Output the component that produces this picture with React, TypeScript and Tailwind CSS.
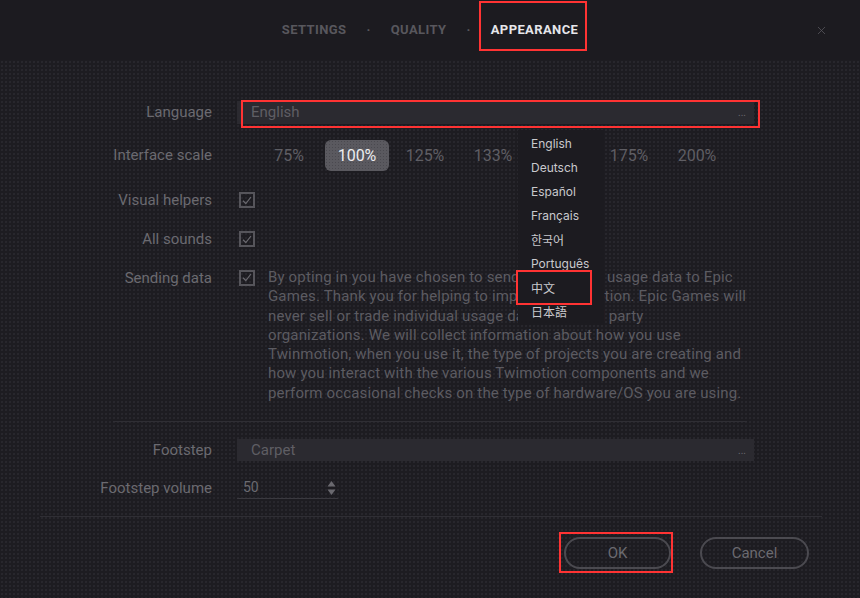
import { X } from "lucide-react";

const LANGS = [
  { label: "English", cjk: false },
  { label: "Deutsch", cjk: false },
  { label: "Español", cjk: false },
  { label: "Français", cjk: false },
  { label: "한국어", cjk: true },
  { label: "Português", cjk: false },
  { label: "中文", cjk: true },
  { label: "日本語", cjk: true },
];

const SCALES = ["75%", "100%", "125%", "133%", "150%", "175%", "200%"];

function Check() {
  return (
    <div className="w-[16px] h-[16px] border-2 border-[#56555b] grid place-items-center">
      <svg width="10" height="9" viewBox="0 0 10 9" fill="none">
        <path d="M1 4.8 L3.8 7.5 L9 1" stroke="#6a696f" strokeWidth="1.2" />
      </svg>
    </div>
  );
}

function Label({ children }: { children: React.ReactNode }) {
  return <div className="w-[212px] shrink-0 text-right text-[15px] text-[#6b6a70]">{children}</div>;
}

export default function App() {
  const dots =
    "bg-[radial-gradient(circle,#28272d_0.7px,transparent_0.9px)] bg-[length:4px_4px]";

  return (
    <div className="relative w-[860px] h-[598px] overflow-hidden bg-[#1d1c21] font-['Roboto',sans-serif]">
      {/* header tabs */}
      <div className="h-[60px] flex items-center justify-center gap-[20px] text-[13px] font-bold tracking-[0.03em] bg-[#1c1b20]">
        <span className="text-[#58575d]">SETTINGS</span>
        <span className="text-[#58575d]">·</span>
        <span className="text-[#58575d]">QUALITY</span>
        <span className="text-[#58575d]">·</span>
        <span className="text-[#e6e6ea]">APPEARANCE</span>
      </div>
      <X className="absolute left-[815px] top-[24px] w-[13px] h-[13px] text-[#56555b]" strokeWidth={1.5} />

      <div className={"h-[538px] flex flex-col pt-[41px] " + dots}>
        {/* Language */}
        <div className="flex items-center h-[23px]">
          <Label>Language</Label>
          <div className="ml-[25px] w-[517px] h-[23px] bg-[#2b2a30] flex items-center justify-between pl-[14px] pr-[8px] text-[15px] text-[#5f5e64]">
            <span>English</span>
            <span className="text-[10px] text-[#6b6a70]">...</span>
          </div>
        </div>

        {/* Interface scale */}
        <div className="flex items-center h-[31px] mt-[16px]">
          <Label>Interface scale</Label>
          <div className="ml-[43px] flex items-center">
            {SCALES.map((s) =>
              s === "100%" ? (
                <div key={s} className="w-[68px] flex justify-center">
                  <div className="w-[64px] h-[31px] rounded-[6px] bg-[#5a595f] grid place-items-center text-[16px] text-[#ececef] bg-[radial-gradient(circle,#4a494f_0.7px,transparent_0.9px)] bg-[length:3px_3px]">
                    {s}
                  </div>
                </div>
              ) : (
                <div key={s} className="w-[68px] text-center text-[16px] text-[#5f5e64]">
                  {s}
                </div>
              )
            )}
          </div>
        </div>

        {/* Visual helpers */}
        <div className="flex items-center h-[20px] mt-[19px]">
          <Label>Visual helpers</Label>
          <div className="ml-[27px]">
            <Check />
          </div>
        </div>

        {/* All sounds */}
        <div className="flex items-center h-[20px] mt-[19px]">
          <Label>All sounds</Label>
          <div className="ml-[27px]">
            <Check />
          </div>
        </div>

        {/* Sending data */}
        <div className="flex items-start mt-[19px]">
          <div className="h-[19.5px] flex items-center">
            <Label>Sending data</Label>
          </div>
          <div className="ml-[27px] h-[19.5px] flex items-center">
            <Check />
          </div>
          <p className="ml-[13px] text-[15px] tracking-[0.15px] leading-[19.3px] text-[#5c5b61]">
            By opting in you have chosen to send anonymous usage data to Epic
            <br />
            Games. Thank you for helping to improve Twinmotion. Epic Games will
            <br />
            never sell or trade individual usage data with third party
            <br />
            organizations. We will collect information about how you use
            <br />
            Twinmotion, when you use it, the type of projects you are creating and
            <br />
            how you interact with the various Twimotion components and we
            <br />
            perform occasional checks on the type of hardware/OS you are using.
          </p>
        </div>

        <div className="ml-[113px] w-[634px] h-px bg-[#2f2e34] mt-[18px]" />

        {/* Footstep */}
        <div className="flex items-center h-[22px] mt-[17px]">
          <Label>Footstep</Label>
          <div className="ml-[25px] w-[517px] h-[22px] bg-[#2b2a30] flex items-center justify-between pl-[14px] pr-[8px] text-[15px] text-[#5f5e64]">
            <span>Carpet</span>
            <span className="text-[10px] text-[#6b6a70]">...</span>
          </div>
        </div>

        {/* Footstep volume */}
        <div className="flex items-center h-[22px] mt-[16px]">
          <Label>Footstep volume</Label>
          <div className="ml-[25px] w-[101px] h-[22px] border-b border-[#3a393f] flex items-center justify-between pl-[6px] pr-[2px] text-[14px] text-[#6b6a70]">
            <span>50</span>
            <svg width="9" height="18" viewBox="0 0 9 18">
              <path d="M4.5 2 L8.5 7.5 L0.5 7.5 Z" fill="#6a696f" />
              <path d="M4.5 16 L8.5 10.5 L0.5 10.5 Z" fill="#6a696f" />
            </svg>
          </div>
        </div>

        <div className="ml-[40px] w-[782px] h-px bg-[#2f2e34] mt-[17px]" />

        {/* buttons */}
        <div className="flex justify-end gap-[29px] pr-[51px] mt-[20px]">
          <button className="w-[107px] h-[32px] rounded-full border-2 border-[#4b4a50] text-[15px] text-[#6b6a70]">
            OK
          </button>
          <button className="w-[109px] h-[32px] rounded-full border-2 border-[#4b4a50] text-[15px] text-[#6b6a70]">
            Cancel
          </button>
        </div>
      </div>

      {/* language dropdown */}
      <div className="absolute left-[518px] top-[130px] w-[86px] h-[195px] bg-[#1c1b20] pt-[2px] pl-[13px]">
        {LANGS.map((l) => (
          <div
            key={l.label}
            className={
              "h-[24px] flex items-center text-[12px] text-[#c9c9cd] " +
              (l.cjk
                ? "font-['Noto_Sans_CJK_SC','Noto_Sans_CJK_KR',sans-serif]"
                : "font-['Inter','Noto_Sans',sans-serif]")
            }
          >
            {l.label}
          </div>
        ))}
      </div>

      {/* annotation boxes */}
      <div className="absolute left-[479px] top-[1px] w-[108px] h-[50px] border-2 border-[#ff3333]" />
      <div className="absolute left-[241px] top-[100px] w-[519px] h-[28px] border-2 border-[#ff3333]" />
      <div className="absolute left-[516px] top-[270px] w-[76px] h-[35px] border-2 border-[#ff3333]" />
      <div className="absolute left-[559px] top-[532px] w-[114px] h-[41px] border-2 border-[#ff3333]" />
    </div>
  );
}
